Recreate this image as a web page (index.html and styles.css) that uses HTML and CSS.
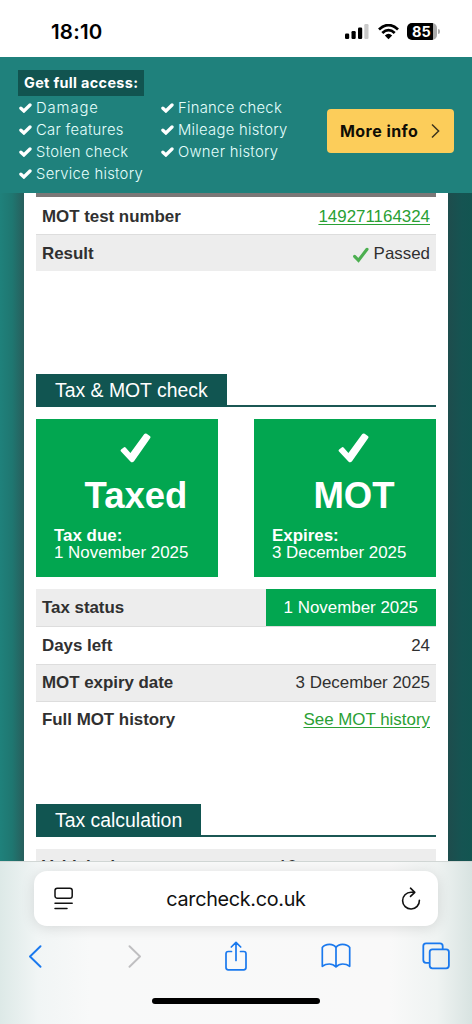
FILE: index.html
```html
<!DOCTYPE html>
<html lang="en">
<head>
<meta charset="utf-8">
<title>carcheck.co.uk</title>
<link rel="stylesheet" href="styles.css">
</head>
<body>
<svg class="defs" width="0" height="0">
  <symbol id="tick" viewBox="0 0 13 10"><path d="M1.9 5.200 4.900 8 11 2" fill="none" stroke="currentColor" stroke-width="3.300" stroke-linecap="round" stroke-linejoin="miter"/></symbol>
  <symbol id="bigtick" viewBox="0 0 31 30"><path d="M.8 18.2Q.2 17.4 1.1 16.4L3.7 14.4Q4.8 13.7 5.8 14.7L10.4 20.1 24.1 1.3Q25.2-.1 26.7.8L29.8 3Q31 3.9 30.1 5.2L14.2 28Q12.3 30.5 10.4 28.4Z" fill="currentColor"/></symbol>
</svg>
<div class="phone">
  <header class="status">
    <span class="time">18:10</span>
    <div class="indicators">
      <svg width="24" height="16" viewBox="0 0 24 16"><rect x="0" y="9.5" width="4.2" height="5.5" rx="1.2"/><rect x="6.5" y="7" width="4.2" height="8" rx="1.2"/><rect x="13" y="3.5" width="4.2" height="11.500" rx="1.2"/><rect x="19.300" y="0" width="4.200" height="15" rx="1.2" fill="#c9c9c9"/></svg>
      <svg width="21" height="16" viewBox="0 0 21 16"><path d="M1 5.500Q10.500-3.200 20 5.500M4.300 9Q10.500 3.200 16.700 9" fill="none" stroke="#000" stroke-width="2.800"/><path d="M6.800 11.500Q10.500 8.200 14.200 11.500L10.500 15.200Z"/></svg>
      <span class="battery"><b>85</b></span>
    </div>
  </header>

  <section class="promo">
    <div>
      <h2>Get full access:</h2>
      <div class="features">
        <ul>
          <li><svg><use href="#tick"/></svg><span class="wide">Damage</span></li>
          <li><svg><use href="#tick"/></svg><span>Car features</span></li>
          <li><svg><use href="#tick"/></svg><span>Stolen check</span></li>
          <li><svg><use href="#tick"/></svg><span>Service history</span></li>
        </ul>
        <ul>
          <li><svg><use href="#tick"/></svg><span>Finance check</span></li>
          <li><svg><use href="#tick"/></svg><span>Mileage history</span></li>
          <li><svg><use href="#tick"/></svg><span>Owner history</span></li>
        </ul>
      </div>
    </div>
    <a class="more">More info<svg width="9" height="16" viewBox="0 0 9 16"><path d="M1 1.500 7.600 8 1 14.500" fill="none" stroke="#3d341d" stroke-width="1.500"/></svg></a>
  </section>

  <main class="page">
    <div class="sheet">
      <div class="bar"></div>
      <dl class="table first">
        <div><dt>MOT test number</dt><dd><a>149271164324</a></dd></div>
        <div class="grey"><dt>Result</dt><dd><svg class="pass" width="16" height="16" viewBox="0 0 16 16"><path d="M1.600 9.300 5.500 13.300 14 2.300" fill="none" stroke="#4caf50" stroke-width="3.100" stroke-linejoin="miter" stroke-linecap="round"/></svg>Passed</dd></div>
      </dl>
      <div class="heading"><h3>Tax &amp; MOT check</h3></div>
      <div class="cards">
        <div class="card"><svg><use href="#bigtick"/></svg><h4>Taxed</h4><p><b>Tax due:</b><br>1 November 2025</p></div>
        <div class="card"><svg><use href="#bigtick"/></svg><h4>MOT</h4><p><b>Expires:</b><br>3 December 2025</p></div>
      </div>
      <dl class="table">
        <div class="grey"><dt>Tax status</dt><dd class="flag">1 November 2025</dd></div>
        <div><dt>Days left</dt><dd>24</dd></div>
        <div class="grey"><dt>MOT expiry date</dt><dd>3 December 2025</dd></div>
        <div><dt>Full MOT history</dt><dd><a>See MOT history</a></dd></div>
      </dl>
      <div class="heading second"><h3>Tax calculation</h3></div>
      <dl class="table last"><div class="grey"><dt>Vehicle duty</dt><dd>10</dd></div></dl>
    </div>
  </main>

  <footer class="browser">
    <div class="address">
      <svg width="20" height="23" viewBox="0 0 20 23"><g fill="none" stroke="#111" stroke-width="1.500" stroke-linecap="round"><rect x="1" y="1.200" width="17.200" height="10" rx="2.300"/><path d="M1 16.200H18.200M1 21.400H13"/></g></svg>
      <span>carcheck.co.uk</span>
      <svg width="20" height="23" viewBox="0 0 20 23"><g fill="none" stroke="#111" stroke-width="1.600" stroke-linecap="round" stroke-linejoin="round"><path d="M13 5.200H10A8.400 8.400 0 1 0 18.400 13.300M9.500 1.200 13.800 5.300 9.500 9.400"/></g></svg>
    </div>
    <nav class="tools">
      <svg width="14" height="23" viewBox="0 0 14 23"><path d="M12.500 1.200 2 11.500 12.500 21.800" fill="none" stroke="#1a79ee" stroke-width="1.900" stroke-linecap="round" stroke-linejoin="round"/></svg>
      <svg width="14" height="23" viewBox="0 0 14 23"><path d="M1.500 1.200 12 11.500 1.500 21.800" fill="none" stroke="#bfbfc1" stroke-width="1.900" stroke-linecap="round" stroke-linejoin="round"/></svg>
      <svg width="24" height="31" viewBox="0 0 24 31"><g fill="none" stroke="#1a79ee" stroke-width="1.700" stroke-linecap="round" stroke-linejoin="round"><path d="M7.500 10.500H4.300Q2 10.500 2 12.800V26.500Q2 28.800 4.300 28.800H19.700Q22 28.800 22 26.500V12.800Q22 10.500 19.700 10.500H16.500M12 19.500V1.500M7.300 6 12 1.300 16.700 6"/></g></svg>
      <svg width="30" height="26" viewBox="0 0 30 26"><path d="M15 4.500Q13 1.300 8.500 1.300Q3.500 1.300 1.300 4.500V23.300Q4.500 21 8.300 21T15 24Q17.800 21 21.700 21T28.700 23.300V4.500Q26.500 1.300 21.500 1.300Q17 1.300 15 4.500ZV24" fill="none" stroke="#1a79ee" stroke-width="1.700" stroke-linejoin="round"/></svg>
      <svg width="28" height="28" viewBox="0 0 28 28"><path d="M7.700 20.800H4Q1.300 20.800 1.300 18.100V4Q1.300 1.300 4 1.300H18Q20.700 1.300 20.700 4V7.200" fill="none" stroke="#1a79ee" stroke-width="1.800"/><rect x="7.700" y="7.300" width="19.200" height="19" rx="2.700" fill="none" stroke="#1a79ee" stroke-width="1.800"/></svg>
    </nav>
    <div class="home"></div>
  </footer>
</div>
</body>
</html>
```
FILE: styles.css
```css
* { box-sizing: border-box; }
body { margin: 0; font-family: "Liberation Sans", Arial, sans-serif; }
h2, h3, h4, p, ul, dl, dd { margin: 0; padding: 0; }
.defs { position: absolute; }
svg { display: block; flex: none; }
.phone { width: 472px; height: 1024px; display: flex; flex-direction: column; overflow: hidden; background: #fff; }

.status { height: 57px; flex: none; display: flex; justify-content: space-between; padding: 20px 35px 0 51px; font-family: Inter, sans-serif; }
.time { font-size: 20.5px; line-height: 24px; font-weight: 600; letter-spacing: .2px; }
.indicators { display: flex; gap: 8px; padding-top: 4px; }
.indicators svg + svg { margin-left: 1px; }
.battery { position: relative; width: 30px; height: 17px; margin-top: -1px; border-radius: 5px; background: linear-gradient(90deg, #000 26px, #aaa 26px); color: #fff; font-size: 14.5px; line-height: 17px; padding-left: 5px; }
.battery::after { content: ""; position: absolute; right: -3px; top: 6px; width: 2px; height: 5px; border-radius: 0 2px 2px 0; background: #aaa; }

.promo { height: 136px; flex: none; background: #1f817c; color: #e6fffc; display: flex; justify-content: space-between; padding: 13px 18px 0; font-family: Inter, sans-serif; }
.promo h2 { width: 126px; height: 26px; background: #115450; color: #fff; font-size: 14.4px; line-height: 25px; padding-left: 6px; font-weight: 700; letter-spacing: .35px; white-space: nowrap; }
.features { display: flex; padding-top: 1px; }
.features ul { list-style: none; width: 142px; }
.features li { height: 22px; display: flex; align-items: center; gap: 4px; font-size: 14.8px; font-weight: 300; letter-spacing: .28px; white-space: nowrap; }
.features .wide { letter-spacing: .9px; }
.features svg { width: 13px; height: 10px; color: #fff; margin-left: 1px; }
.more { width: 127px; height: 44px; margin-top: 39px; border-radius: 4px; background: #fccd5a; color: #100d05; display: flex; align-items: center; justify-content: space-between; padding: 0 14px 0 13px; font-size: 16px; font-weight: 700; letter-spacing: .45px; white-space: nowrap; }

.page { height: 668px; flex: none; overflow: hidden; padding: 0 24px; background: linear-gradient(90deg, #1f817b 0, #1f7771 12px, #285e5c 24px, #1d4d4d 449px, #155452 462px, #135551 472px); }
.sheet { height: 100%; background: #fff; padding: 0 12px; overflow: hidden; }
.bar { height: 4px; background: #7b7878; }
.table { font-size: 16.92px; line-height: 20px; color: #303030; }
.table > div { height: 37.3px; display: flex; justify-content: space-between; border-top: 1px solid #ddd; padding: 8.4px 6px 0; }
.table > div:first-child { border-color: transparent; }
.table > .grey { background: #ededed; }
.table dt { font-weight: 700; letter-spacing: -.02px; }
.table dd { display: flex; gap: 4px; }
.table a { color: #2aa034; text-decoration: underline; text-underline-offset: 2px; }
.first { height: 177px; }
.table.first > div { height: 36.900px; padding-top: 9px; }
.table.first > .grey { padding-top: 8.800px; }
.pass { margin: 3px 1px 0 0; }
.heading { height: 33px; border-bottom: 2px solid #1b5754; display: flex; }
.heading h3 { height: 33px; background: #115551; color: #fff; font-size: 19.4px; line-height: 33px; font-weight: 400; padding: 0 19px; white-space: nowrap; }
.cards { display: flex; justify-content: space-between; margin: 12px 0 12px; }
.card { width: 182px; height: 158px; background: #02a650; color: #fff; padding: 14px 18px 0; }
.card svg { width: 31px; height: 30px; margin: 0 auto 0 66px; }
.card h4 { font-size: 36.5px; line-height: 42px; text-align: center; margin: 12px 0 10px; padding-left: 18px; }
.card p { font-size: 16.92px; line-height: 17px; white-space: nowrap; }
.table .flag { background: #02a650; color: #fff; margin: -9.400px -6px 0; padding: 9.400px 18px 0; height: 37px; }
.second { margin-top: 66px; }
.last { margin-top: 12px; }
.table.last > div { padding-top: 7px; }
.last dd { width: 152px; }

.browser { height: 163px; flex: none; border-top: 1px solid #d1d7d5; background: linear-gradient(90deg, #dde9e7 0, #f1f5f5 38px, #f8f9f9 90px, #f9f9f9 390px, #eff3f2 437px, #d8e3e1 472px); }
.address { width: 404px; height: 55px; margin: 9px auto 0; border-radius: 13px; background: #fff; box-shadow: 0 2px 14px #0000001f; display: flex; align-items: center; justify-content: space-between; padding: 0 17px 0 20px; font-family: Inter, sans-serif; font-size: 19.8px; color: #111; letter-spacing: -.3px; }
.address span { margin-right: 3px; }
.tools { height: 60px; display: flex; align-items: center; justify-content: space-between; padding: 0 21px 0 20px; }
.tools svg { width: 30px; }
.home { width: 168px; height: 6px; border-radius: 3px; background: #000; margin: 12px auto 0; }
```
